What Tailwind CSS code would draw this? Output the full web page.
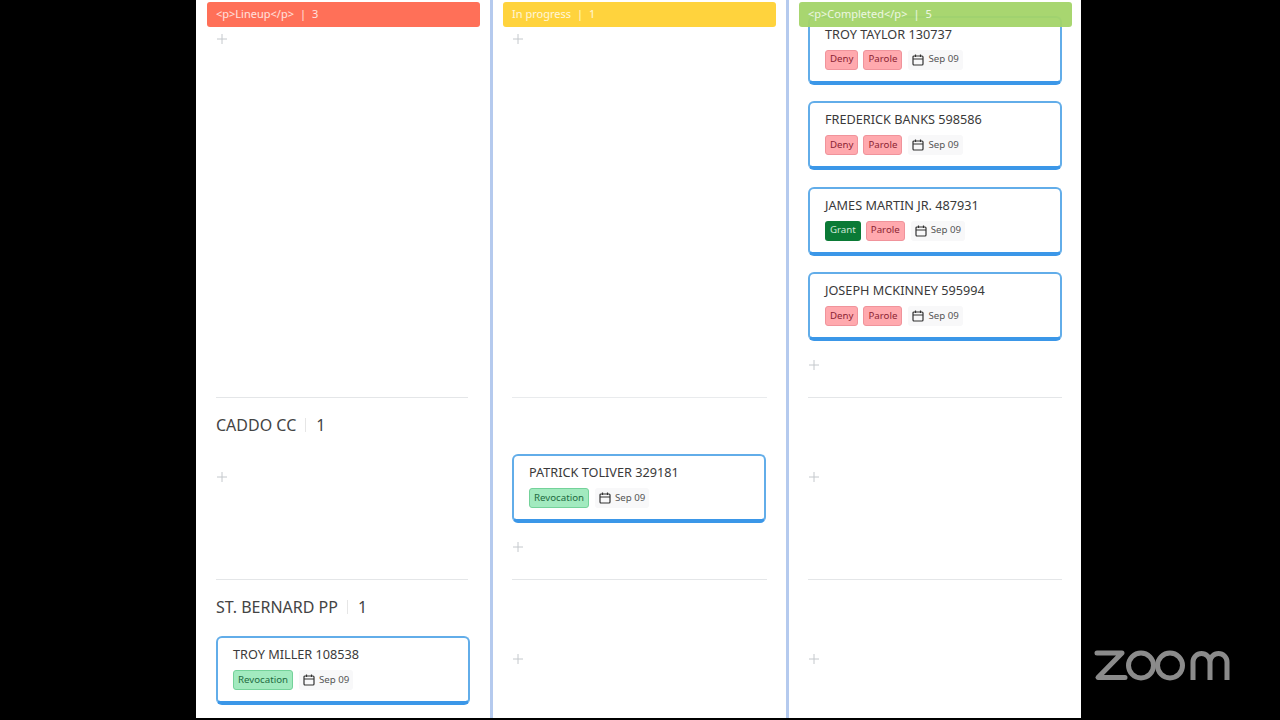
<!DOCTYPE html>
<html lang="en">
  <head>
    <meta charset="UTF-8" />
    <title>Board</title>
    <script src="https://cdn.jsdelivr.net/npm/@tailwindcss/browser@4"></script>
  </head>
  <body class="bg-black overflow-hidden font-['Noto_Sans',sans-serif] text-[#3a3a3a]">
    <div class="flex h-[720px] w-[1280px] pl-[196px]">
      <!-- board -->
      <div class="flex h-[718px] w-[885px] bg-white overflow-hidden">
        <!-- lineup -->
        <div class="relative w-[294px] pl-[20px] pr-[22px]">
          <div class="absolute z-10 left-[11px] right-[10px] top-[2px] h-[25px] rounded-[3px] bg-[#ff7058] text-white/80 text-[11px] flex items-center pl-[9px] gap-[6px]">
            <span>&lt;p&gt;Lineup&lt;/p&gt;</span><span>|</span><span>3</span>
          </div>
          <div class="h-[398px] border-b border-[#e4e6e8] pt-[16px]">
            <div class="h-[46px] flex items-center"><svg class="ml-[1px]" width="10" height="10" viewBox="0 0 10 10" stroke="#c4c8cc" fill="none"><path d="M5 0v10M0 5h10" /></svg></div>
          </div>
          <div class="h-[182px] border-b border-[#e4e6e8]">
            <div class="h-[54px] mb-[2px] flex items-center text-[16px] text-[#444]">
              <span>CADDO CC</span><span class="w-px h-[14px] bg-[#e6e6e6] ml-[9px] mr-[10px]"></span><span>1</span>
            </div>
            <div class="h-[46px] flex items-center"><svg class="ml-[1px]" width="10" height="10" viewBox="0 0 10 10" stroke="#c4c8cc" fill="none"><path d="M5 0v10M0 5h10" /></svg></div>
          </div>
          <div>
            <div class="h-[54px] mb-[2px] flex items-center text-[16px] text-[#444]">
              <span>ST. BERNARD PP</span><span class="w-px h-[14px] bg-[#e6e6e6] ml-[9px] mr-[10px]"></span><span>1</span>
            </div>
            <div class="w-[254px] h-[69px] rounded-[6px] border-2 border-b-4 border-[#62ade9] border-b-[#3b97e8] pl-[15px] pt-[7px]">
              <div class="text-[12.7px] leading-[18px]">TROY MILLER 108538</div>
              <div class="flex items-center mt-[7px] text-[9.7px]">
                <span class="h-[20px] px-[4px] flex items-center rounded-[3px] border border-[#74d29a] bg-[#a2eabf] text-[#1d6b41]">Revocation</span>
                <span class="flex items-center gap-[4px] ml-[6px] px-[4px] h-[20px] bg-[#f8f8f9] rounded-[3px] text-[#555]">
                  <svg width="12" height="12" viewBox="0 0 12 12" fill="none" stroke="#333" stroke-width="1.2"><rect x="1" y="2" width="10" height="9" rx="1" /><path d="M1 5h10M3.5 0.5v2.5M8.5 0.5v2.5" /></svg>
                  Sep 09
                </span>
              </div>
            </div>
          </div>
        </div>
        <div class="w-[3px] bg-[#b5caee]"></div>

        <!-- in progress -->
        <div class="relative w-[293px] px-[19px]">
          <div class="absolute z-10 left-[10px] right-[10px] top-[2px] h-[25px] rounded-[3px] bg-[#ffd33d] text-white/80 text-[11px] flex items-center pl-[9px] gap-[6px]">
            <span>In progress</span><span>|</span><span>1</span>
          </div>
          <div class="h-[398px] border-b border-[#e9ebed] pt-[16px]">
            <div class="h-[46px] flex items-center"><svg class="ml-[1px]" width="10" height="10" viewBox="0 0 10 10" stroke="#c4c8cc" fill="none"><path d="M5 0v10M0 5h10" /></svg></div>
          </div>
          <div class="h-[182px] border-b border-[#e4e6e8] pt-[56px]">
            <div class="w-[254px] h-[69px] rounded-[6px] border-2 border-b-4 border-[#62ade9] border-b-[#3b97e8] pl-[15px] pt-[7px]">
              <div class="text-[12.7px] leading-[18px]">PATRICK TOLIVER 329181</div>
              <div class="flex items-center mt-[7px] text-[9.7px]">
                <span class="h-[20px] px-[4px] flex items-center rounded-[3px] border border-[#74d29a] bg-[#a2eabf] text-[#1d6b41]">Revocation</span>
                <span class="flex items-center gap-[4px] ml-[6px] px-[4px] h-[20px] bg-[#f8f8f9] rounded-[3px] text-[#555]">
                  <svg width="12" height="12" viewBox="0 0 12 12" fill="none" stroke="#333" stroke-width="1.2"><rect x="1" y="2" width="10" height="9" rx="1" /><path d="M1 5h10M3.5 0.5v2.5M8.5 0.5v2.5" /></svg>
                  Sep 09
                </span>
              </div>
            </div>
            <div class="h-[46px] flex items-center mt-[1px]"><svg class="ml-[1px]" width="10" height="10" viewBox="0 0 10 10" stroke="#c4c8cc" fill="none"><path d="M5 0v10M0 5h10" /></svg></div>
          </div>
          <div class="pt-[56px]">
            <div class="h-[46px] flex items-center"><svg class="ml-[1px]" width="10" height="10" viewBox="0 0 10 10" stroke="#c4c8cc" fill="none"><path d="M5 0v10M0 5h10" /></svg></div>
          </div>
        </div>
        <div class="w-[3px] bg-[#b5caee]"></div>

        <!-- completed -->
        <div class="relative flex-1 px-[19px]">
          <div class="absolute z-10 left-[10px] right-[9px] top-[2px] h-[25px] rounded-[3px] bg-[#a3d468]/95 text-white/80 text-[11px] flex items-center pl-[9px] gap-[6px]">
            <span>&lt;p&gt;Completed&lt;/p&gt;</span><span>|</span><span>5</span>
          </div>
          <div class="h-[398px] border-b border-[#e4e6e8] pt-[15.5px]">
            <div class="flex flex-col gap-[16.5px]">
              <div class="w-[254px] h-[69px] rounded-[6px] border-2 border-b-4 border-[#62ade9] border-b-[#3b97e8] pl-[15px] pt-[7px]">
                <div class="text-[12.7px] leading-[18px]">TROY TAYLOR 130737</div>
                <div class="flex items-center mt-[7px] text-[9.7px]">
                  <span class="h-[20px] px-[4px] flex items-center rounded-[3px] border border-[#f0939b] bg-[#ffa9ae] text-[#8c2433]">Deny</span>
                  <span class="h-[20px] px-[4px] ml-[5px] flex items-center rounded-[3px] border border-[#f0939b] bg-[#ffa9ae] text-[#8c2433]">Parole</span>
                  <span class="flex items-center gap-[4px] ml-[6px] px-[4px] h-[20px] bg-[#f8f8f9] rounded-[3px] text-[#555]">
                    <svg width="12" height="12" viewBox="0 0 12 12" fill="none" stroke="#333" stroke-width="1.2"><rect x="1" y="2" width="10" height="9" rx="1" /><path d="M1 5h10M3.5 0.5v2.5M8.5 0.5v2.5" /></svg>
                    Sep 09
                  </span>
                </div>
              </div>
              <div class="w-[254px] h-[69px] rounded-[6px] border-2 border-b-4 border-[#62ade9] border-b-[#3b97e8] pl-[15px] pt-[7px]">
                <div class="text-[12.7px] leading-[18px]">FREDERICK BANKS 598586</div>
                <div class="flex items-center mt-[7px] text-[9.7px]">
                  <span class="h-[20px] px-[4px] flex items-center rounded-[3px] border border-[#f0939b] bg-[#ffa9ae] text-[#8c2433]">Deny</span>
                  <span class="h-[20px] px-[4px] ml-[5px] flex items-center rounded-[3px] border border-[#f0939b] bg-[#ffa9ae] text-[#8c2433]">Parole</span>
                  <span class="flex items-center gap-[4px] ml-[6px] px-[4px] h-[20px] bg-[#f8f8f9] rounded-[3px] text-[#555]">
                    <svg width="12" height="12" viewBox="0 0 12 12" fill="none" stroke="#333" stroke-width="1.2"><rect x="1" y="2" width="10" height="9" rx="1" /><path d="M1 5h10M3.5 0.5v2.5M8.5 0.5v2.5" /></svg>
                    Sep 09
                  </span>
                </div>
              </div>
              <div class="w-[254px] h-[69px] rounded-[6px] border-2 border-b-4 border-[#62ade9] border-b-[#3b97e8] pl-[15px] pt-[7px]">
                <div class="text-[12.7px] leading-[18px]">JAMES MARTIN JR. 487931</div>
                <div class="flex items-center mt-[7px] text-[9.7px]">
                  <span class="h-[20px] px-[5px] flex items-center rounded-[3px] bg-[#0b7a36] text-[#cfe8d6]">Grant</span>
                  <span class="h-[20px] px-[4px] ml-[5px] flex items-center rounded-[3px] border border-[#f0939b] bg-[#ffa9ae] text-[#8c2433]">Parole</span>
                  <span class="flex items-center gap-[4px] ml-[6px] px-[4px] h-[20px] bg-[#f8f8f9] rounded-[3px] text-[#555]">
                    <svg width="12" height="12" viewBox="0 0 12 12" fill="none" stroke="#333" stroke-width="1.2"><rect x="1" y="2" width="10" height="9" rx="1" /><path d="M1 5h10M3.5 0.5v2.5M8.5 0.5v2.5" /></svg>
                    Sep 09
                  </span>
                </div>
              </div>
              <div class="w-[254px] h-[69px] rounded-[6px] border-2 border-b-4 border-[#62ade9] border-b-[#3b97e8] pl-[15px] pt-[7px]">
                <div class="text-[12.7px] leading-[18px]">JOSEPH MCKINNEY 595994</div>
                <div class="flex items-center mt-[7px] text-[9.7px]">
                  <span class="h-[20px] px-[4px] flex items-center rounded-[3px] border border-[#f0939b] bg-[#ffa9ae] text-[#8c2433]">Deny</span>
                  <span class="h-[20px] px-[4px] ml-[5px] flex items-center rounded-[3px] border border-[#f0939b] bg-[#ffa9ae] text-[#8c2433]">Parole</span>
                  <span class="flex items-center gap-[4px] ml-[6px] px-[4px] h-[20px] bg-[#f8f8f9] rounded-[3px] text-[#555]">
                    <svg width="12" height="12" viewBox="0 0 12 12" fill="none" stroke="#333" stroke-width="1.2"><rect x="1" y="2" width="10" height="9" rx="1" /><path d="M1 5h10M3.5 0.5v2.5M8.5 0.5v2.5" /></svg>
                    Sep 09
                  </span>
                </div>
              </div>
            </div>
            <div class="h-[46px] flex items-center mt-[1px]"><svg class="ml-[1px]" width="10" height="10" viewBox="0 0 10 10" stroke="#c4c8cc" fill="none"><path d="M5 0v10M0 5h10" /></svg></div>
          </div>
          <div class="h-[182px] border-b border-[#e4e6e8] pt-[56px]">
            <div class="h-[46px] flex items-center"><svg class="ml-[1px]" width="10" height="10" viewBox="0 0 10 10" stroke="#c4c8cc" fill="none"><path d="M5 0v10M0 5h10" /></svg></div>
          </div>
          <div class="pt-[56px]">
            <div class="h-[46px] flex items-center"><svg class="ml-[1px]" width="10" height="10" viewBox="0 0 10 10" stroke="#c4c8cc" fill="none"><path d="M5 0v10M0 5h10" /></svg></div>
          </div>
        </div>
      </div>

      <!-- zoom watermark -->
      <div class="flex-1 pl-[13px] pt-[649px]">
        <svg width="138" height="32" viewBox="0 0 138 32" fill="none" stroke="#8b8b8b" stroke-width="5">
          <path d="M3 4H28L4 28.5H31" stroke-linejoin="round" stroke-linecap="round" />
          <circle cx="47" cy="16.5" r="12.5" />
          <circle cx="76" cy="16.5" r="12.5" />
          <path d="M98 31V13a8.5 8.5 0 0 1 17 0V31M115 13a8.5 8.5 0 0 1 17 0V31" transform="translate(1 0)" />
        </svg>
      </div>
    </div>
  </body>
</html>
